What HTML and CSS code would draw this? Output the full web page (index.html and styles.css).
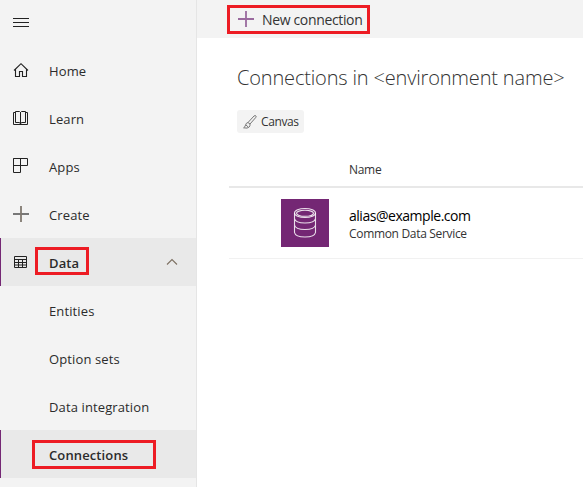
FILE: index.html
```html
<!DOCTYPE html>
<html lang="en">
<head>
<meta charset="utf-8">
<title>Connections</title>
<link rel="stylesheet" href="styles.css">
</head>
<body>
<div class="app">
  <nav class="sidebar">
    <div class="menu-toggle">
      <svg width="16" height="10" viewBox="0 0 16 10" shape-rendering="crispEdges"><path d="M0 .5h16M0 4.5h16M0 8.5h16" stroke="#222" fill="none"/></svg>
    </div>
    <a class="item"><svg class="icon" viewBox="0 0 16 16"><path d="M1 8.5 8 1.7l7 6.800M2.500 7.500v7h4v-5h3v5h4v-7" stroke="#222" stroke-width="1.1" fill="none"/></svg><span class="label">Home</span></a>
    <a class="item"><svg class="icon" viewBox="0 0 16 16"><path d="M2.500 2.500h-2v12h14v-12h-2M2.500 12.500v-11h4l1 1 1-1h4v11h-4l-1 1.500-1-1.500zM7.500 2v12" stroke="#222" fill="none"/></svg><span class="label">Learn</span></a>
    <a class="item"><svg class="icon" viewBox="0 0 16 16"><path d="M.5.5h14v7H.5zM7.500.5v14h-7v-14" stroke="#222" fill="none"/></svg><span class="label">Apps</span></a>
    <a class="item"><svg class="icon" viewBox="0 0 16 16"><path d="M0 8h16" stroke="#777" stroke-width="2"/><path d="M8 0v16" stroke="#817970" stroke-width="1.800"/></svg><span class="label">Create</span></a>
    <a class="item active"><svg class="icon" viewBox="0 0 16 16"><path d="M1.500 2.500h12v11h-12zM1 5.500h13M1 8.500h13M1 11h13M5.500 5v9M9.500 5v9" stroke="#222" fill="none"/></svg><span class="label">Data</span>
      <svg class="chevron" width="12" height="8" viewBox="0 0 12 8"><path d="M1 6.500 6 1.500l5 5" stroke="#7d7062" stroke-width="1.100" fill="none"/></svg>
      <span class="mark mark-data"></span></a>
    <a class="item sub"><span class="label">Entities</span></a>
    <a class="item sub"><span class="label">Option sets</span></a>
    <a class="item sub"><span class="label">Data integration</span></a>
    <a class="item sub active"><span class="label">Connections</span><span class="mark mark-connections"></span></a>
  </nav>
  <main class="main">
    <header class="toolbar">
      <svg width="16" height="16" viewBox="0 0 16 16"><path d="M0 8h16M8 0v16" stroke="#9a6a9e" stroke-width="1.800"/></svg>
      <span class="new">New connection</span>
      <span class="mark mark-new"></span>
    </header>
    <h1>Connections in &lt;environment name&gt;</h1>
    <div class="chip">
      <svg width="14" height="14" viewBox="0 0 14 14"><path d="M5 7.500 11 1q1.400-1 2 0 .500.600-.4 1.700L7 9M5 7.500 7 9M5 7.500Q3 7.800 2.600 10 2 12 .6 12.800q4 1 5.600-.8Q7.300 10.700 7 9M3 10l2 1.800" stroke="#777" fill="none"/></svg>
      <span class="canvas">Canvas</span>
    </div>
    <section class="table">
      <div class="head"><span class="name">Name</span></div>
      <div class="row">
        <div class="tile"><svg width="24" height="32" viewBox="0 0 24 32"><g stroke="#fff" stroke-opacity=".85" stroke-width="1.100" fill="none"><ellipse cx="12" cy="6" rx="10.500" ry="4.500"/><ellipse cx="12" cy="6.300" rx="8.500" ry="3"/><path d="M1.500 6v19.500C2 28 6 30 12 30s10-2 10.500-4.500V6M1.500 11.500C2 14 6 16 12 16s10-2 10.500-4.500M1.500 18C2 20.500 6 22.500 12 22.500S22 20.500 22.500 18"/></g></svg></div>
        <div class="info"><span class="alias">alias@example.com</span><span class="service">Common Data Service</span></div>
      </div>
    </section>
  </main>
</div>
</body>
</html>
```

FILE: styles.css
```css
* { box-sizing: border-box; }
body { margin: 0; background: #fff; color: #333; font: 13px/20px "Open Sans", "Noto Sans", sans-serif; }
svg { display: block; flex: none; }
span { white-space: nowrap; }
.app { display: flex; width: 583px; height: 487px; overflow: hidden; }
.sidebar { flex: none; width: 197px; background: #f3f3f3; border-right: 1px solid #e5e5e5; }
.menu-toggle { height: 46px; padding: 18px 0 0 13px; }
.item { position: relative; display: flex; align-items: center; height: 48px; padding: 2px 0 0 12px; border-left: 1px solid transparent; color: #2b2b2b; letter-spacing: .12px; }
.icon { width: 16px; height: 16px; margin: 0 20px 2px 0; }
.sub { padding-left: 48px; }
.active { background: #e9e9e9; border-left-color: #742774; font-weight: 600; }
.chevron { margin: 0 18px 2px auto; }
.mark { position: absolute; border: 3px solid #ed1c24; }
.mark-data { left: 34px; top: 9px; width: 54px; height: 28px; }
.mark-connections { left: 31px; top: 10px; width: 124px; height: 29px; }
.main { flex: 1; min-width: 0; }
.toolbar { position: relative; display: flex; align-items: center; gap: 8px; height: 38px; padding-left: 41px; background: #f3f3f3; font-size: 14px; letter-spacing: -.35px; }
.new { padding-top: 1px; }
.mark-new { left: 30px; top: 5px; width: 143px; height: 29px; }
h1 { margin: 26px 0 0 40px; height: 28px; font-size: 20px; line-height: 28px; font-weight: 300; letter-spacing: -.17px; color: #333; white-space: nowrap; }
.chip { display: flex; align-items: center; gap: 4px; width: 67px; height: 23px; margin: 18px 0 0 40px; padding-left: 6px; border-radius: 3px; background: #f3f3f3; font-size: 12px; letter-spacing: -.4px; }
.table { margin: 17px 0 0 32px; }
.head { height: 38px; padding: 10px 0 0 120px; border-bottom: 2px solid #e8e8e8; font-size: 12px; letter-spacing: -.3px; }
.row { display: flex; gap: 20px; height: 71px; padding: 11px 0 0 52px; border-bottom: 1px solid #f1f1f1; }
.tile { display: grid; place-items: center; width: 48px; height: 48px; background: #742774; }
.info { display: flex; flex-direction: column; align-items: flex-start; padding-top: 7px; line-height: 19px; }
.alias { color: #000; font-size: 14px; letter-spacing: -.47px; }
.service { font-size: 12px; line-height: 18px; letter-spacing: -.32px; }
```
